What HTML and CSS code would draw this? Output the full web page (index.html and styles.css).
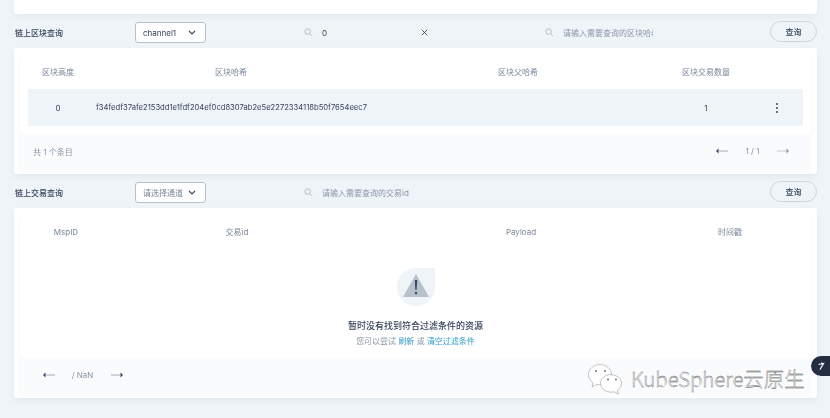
FILE: index.html
```html
<!DOCTYPE html>
<html lang="zh">
<head>
<meta charset="utf-8">
<title>链上查询</title>
<link rel="stylesheet" href="styles.css">
</head>
<body>
<main class="page">
  <div class="card top-card"></div>

  <section>
    <header class="query-bar">
      <h2 class="query-title">链上区块查询</h2>
      <div class="select"><span class="select-value">channel1</span>
        <svg class="chevron" viewBox="0 0 8 5"><path d="M1 1l3 3 3-3"/></svg></div>
      <div class="search search-a">
        <svg class="search-icon" viewBox="0 0 10 10"><circle cx="4" cy="4" r="3"/><path d="M6.3 6.3L9 9"/></svg>
        <span class="search-value">0</span>
        <svg class="clear" viewBox="0 0 8 8"><path d="M1 1l6 6M7 1L1 7"/></svg>
      </div>
      <div class="search search-b">
        <svg class="search-icon" viewBox="0 0 10 10"><circle cx="4" cy="4" r="3"/><path d="M6.3 6.3L9 9"/></svg>
        <span class="placeholder clipped">请输入需要查询的区块哈希</span>
      </div>
      <button class="query-btn">查询</button>
    </header>
    <div class="card table-card">
      <div class="inner">
        <div class="row head-row blocks">
          <span>区块高度</span><span>区块哈希</span><span>区块父哈希</span><span>区块交易数量</span>
        </div>
        <div class="row data-row blocks">
          <span>0</span><span class="hash">f34fedf37afe2153dd1e1fdf204ef0cd8307ab2e5e2272334118b50f7654eec7</span><span></span><span>1</span>
          <svg class="more" viewBox="0 0 4 12"><circle cx="2" cy="2" r="1"/><circle cx="2" cy="6" r="1"/><circle cx="2" cy="10" r="1"/></svg>
        </div>
        <footer class="foot foot-blocks">
          <span class="total">共 1 个条目</span>
          <div class="pager">
            <svg class="arrow" viewBox="0 0 12 6"><path class="head" d="M0 3l2.5-2.5v5z"/><path class="tail" d="M2 3h10"/></svg>
            <span class="pages">1 / 1</span>
            <svg class="arrow faint" viewBox="0 0 12 6"><path class="head" d="M12 3L9.500 .5v5z"/><path class="tail" d="M0 3h10"/></svg>
          </div>
        </footer>
      </div>
    </div>
  </section>

  <section class="tx-section">
    <header class="query-bar">
      <h2 class="query-title">链上交易查询</h2>
      <div class="select"><span class="select-value muted">请选择通道</span>
        <svg class="chevron" viewBox="0 0 8 5"><path d="M1 1l3 3 3-3"/></svg></div>
      <div class="search search-a">
        <svg class="search-icon" viewBox="0 0 10 10"><circle cx="4" cy="4" r="3"/><path d="M6.3 6.3L9 9"/></svg>
        <span class="placeholder">请输入需要查询的交易id</span>
      </div>
      <button class="query-btn">查询</button>
    </header>
    <div class="card table-card">
      <div class="inner">
        <div class="row head-row tx">
          <span>MspID</span><span>交易id</span><span>Payload</span><span>时间戳</span>
        </div>
        <div class="empty">
          <svg class="empty-icon" viewBox="0 0 40 40">
            <path class="blob" d="M20 1h19v19a19 19 0 1 1-19-19z"/>
            <path class="tri" d="M20 7l13 23H7z"/>
            <path class="mark" d="M18.800 13h2.400l-.6 10h-1.200z"/>
            <circle class="mark" cx="20" cy="26" r="1.200"/>
          </svg>
          <p class="empty-title">暂时没有找到符合过滤条件的资源</p>
          <p class="empty-hint">您可以尝试 <a>刷新</a> 或 <a>清空过滤条件</a></p>
        </div>
        <footer class="foot">
          <div class="pager">
            <svg class="arrow" viewBox="0 0 12 6"><path class="head" d="M0 3l2.5-2.5v5z"/><path class="tail" d="M2 3h10"/></svg>
            <span class="pages nan">/ NaN</span>
            <svg class="arrow" viewBox="0 0 12 6"><path class="head" d="M12 3L9.500 .5v5z"/><path class="tail" d="M0 3h10"/></svg>
          </div>
        </footer>
      </div>
    </div>
  </section>
</main>

<div class="float-btn"><svg viewBox="0 0 10 10"><path d="M2.500 3.500l5-1-3.500 6M7.500 2.500L5 2.200"/></svg></div>
<div class="watermark">
  <svg class="wechat" viewBox="0 0 34 31">
    <path d="M12 .5C5.600 .5 .5 5 .5 10.700c0 3.300 1.700 6.100 4.400 8L4 23l4.700-2.600c1.100 .3 2.200 .4 3.300 .4 6.400 0 11.500-4.500 11.500-10.100S18.400 .5 12 .5z"/>
    <path d="M23 10.500c-5.800 0-10.500 3.900-10.500 8.800s4.700 8.800 10.500 8.800c1 0 2-.1 3-.4l4.300 2.500-1-3.800c2.500-1.600 4.200-4 4.200-6.900 0-4.900-4.700-8.800-10.500-8.800z"/>
    <circle class="dot" cx="8" cy="7" r="1"/><circle class="dot" cx="17" cy="7" r="1"/>
    <circle class="dot" cx="20" cy="15.500" r="1"/><circle class="dot" cx="28" cy="15.500" r="1"/>
  </svg>
  <span class="wm-text">KubeSphere云原生</span>
</div>
</body>
</html>
```

FILE: styles.css
```css
* { box-sizing: border-box; }
html, body { margin: 0; height: 100%; }
body {
  position: relative;
  height: 418px;
  overflow: hidden;
  background: #eff4f9;
  font-family: Inter, "Noto Sans CJK SC", sans-serif;
  font-size: 8px;
  color: #36435c;
}
.page { padding: 0 13px 0 14px; filter: blur(.35px); }
.card {
  background: #fff;
  border-radius: 3px;
  box-shadow: 0 3px 6px rgba(36, 46, 66, .05);
}
.top-card { height: 14px; border-radius: 0 0 3px 3px; }

.query-bar { display: flex; align-items: center; height: 34px; padding-top: 3px; }
.query-title { width: 120px; margin: 0 0 0 1px; font-size: 8px; font-weight: 500; color: #36435c; }
.select {
  display: flex; align-items: center; justify-content: space-between;
  width: 71px; height: 21px; padding: 0 9px 0 7px;
  background: #fff; border: 1px solid #b5bfcc; border-radius: 3px;
}
.select-value { white-space: nowrap; }
.muted { color: #79879c; }
.chevron { width: 8px; height: 5px; fill: none; stroke: #36435c; stroke-width: 1.100; }

.search { display: flex; align-items: center; }
.search-a { margin-left: 98px; }
.search-b { margin-left: 117px; }
.search-icon { width: 9px; height: 9px; fill: none; stroke: #a6b2c1; stroke-width: .9; flex: none; }
.search-value { margin-left: 9px; width: 99px; }
.clear { width: 7px; height: 7px; fill: none; stroke: #36435c; stroke-width: 1; }
.placeholder { margin-left: 9px; color: #8a96a8; white-space: nowrap; }
.clipped { width: 90px; overflow: hidden; }
.query-btn {
  width: 47px; height: 21px; margin: -3px 0 0 auto; padding: 0;
  background: transparent; border: 1px solid #ccd3db; border-radius: 11px;
  font: 500 8px Inter, "Noto Sans CJK SC", sans-serif; color: #36435c;
}

.table-card { padding: 6px; }
.inner { box-shadow: 0 2px 5px rgba(36, 46, 66, .03); border-radius: 3px; }
.row { display: grid; align-items: center; }
.blocks { grid-template-columns: 60px 286px 288px 88px 1fr; margin: 0 8px; }
.head-row { height: 35px; color: #79879c; text-align: center; }
.data-row { height: 37px; background: #eff4f9; text-align: center; }
.hash { white-space: nowrap; text-align: left; padding-left: 8px; font-size: 7.63px; }
.more { width: 4px; height: 12px; fill: #36435c; justify-self: center; }

.foot {
  display: flex; align-items: center; justify-content: space-between;
  height: 34px; margin-top: 8px; padding: 0 22px 0 23px;
  background: #f9fbfd; border-radius: 0 0 3px 3px; color: #8a96a8;
}
.total { margin-left: -10px; color: #8a96a8; }
.pager { display: flex; align-items: center; }
.arrow { width: 12px; height: 6px; }
.head { fill: #36435c; }
.tail { stroke: #8a96a8; stroke-width: .8; fill: none; }
.faint .head { fill: #8a96a8; }
.faint .tail { stroke: #b5bfcc; }
.pages { width: 49px; text-align: center; white-space: nowrap; color: #8a96a8; }
.nan { width: 56px; padding-right: 1px; }

.tx { grid-template-columns: 92px 250px 318px 100px 1fr; }
.empty { height: 109px; display: flex; flex-direction: column; align-items: center; padding-top: 18px; }
.empty-icon { width: 40px; height: 40px; flex: none; }
.blob { fill: #eff4f9; }
.tri { fill: #b7c0cc; }
.mark { fill: #36435c; }
.empty-title { margin: 12px 0 0; font-size: 9px; font-weight: 500; line-height: 13px; color: #36435c; }
.empty-hint { margin: 3px 0 0; font-size: 8px; line-height: 12px; color: #8a96a8; }
.empty-hint a { color: #329dce; }
.tx-section .foot { margin-top: 0; justify-content: flex-start; }

.float-btn {
  position: absolute; left: 811px; top: 356px;
  width: 40px; height: 20px; padding: 5px 0 0 5px;
  background: #242e42; border-radius: 10px;
}
.float-btn svg { display: block; width: 10px; height: 10px; fill: none; stroke: #fff; stroke-width: 1.200; }

.watermark { position: absolute; left: 588px; top: 364px; display: flex; align-items: center; gap: 9px; }
.wechat { width: 34px; height: 31px; flex: none; fill: #fff; stroke: #8a8a8a; stroke-width: .5; }
.wechat .dot { fill: #777; stroke: none; }
.wm-text {
  font: 300 20.4px "Noto Sans CJK SC", sans-serif; color: #fff;
  -webkit-text-stroke: .35px #555; white-space: nowrap; line-height: 24px; margin-top: -3px;
}
```
